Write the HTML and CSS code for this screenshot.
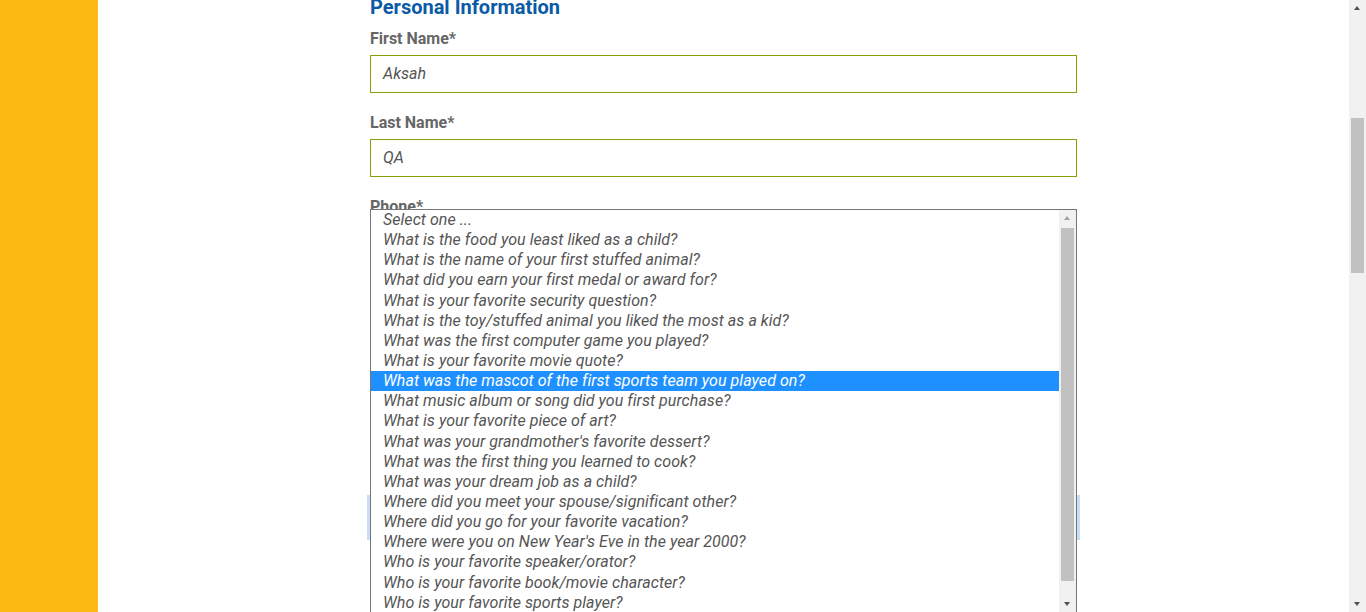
FILE: index.html
```html
<!DOCTYPE html>
<html lang="en">
<head>
<meta charset="utf-8">
<title>Personal Information</title>
<link rel="stylesheet" href="styles.css">
</head>
<body>
<div class="page">
  <aside class="sidebar"></aside>
  <main class="main">
    <div class="content">
      <h2 class="heading">Personal Information</h2>
      <div class="group">
        <label class="label">First Name*</label>
        <div class="input">Aksah</div>
      </div>
      <div class="group">
        <label class="label">Last Name*</label>
        <div class="input">QA</div>
      </div>
      <div class="group last">
        <label class="label">Phone*</label>
        <div class="input"></div>
      </div>
      <div class="focus-box"></div>

      <div class="listbox">
        <div class="options">
          <div class="opt">Select one ...</div>
          <div class="opt">What is the food you least liked as a child?</div>
          <div class="opt">What is the name of your first stuffed animal?</div>
          <div class="opt">What did you earn your first medal or award for?</div>
          <div class="opt">What is your favorite security question?</div>
          <div class="opt">What is the toy/stuffed animal you liked the most as a kid?</div>
          <div class="opt">What was the first computer game you played?</div>
          <div class="opt">What is your favorite movie quote?</div>
          <div class="opt selected">What was the mascot of the first sports team you played on?</div>
          <div class="opt">What music album or song did you first purchase?</div>
          <div class="opt">What is your favorite piece of art?</div>
          <div class="opt">What was your grandmother's favorite dessert?</div>
          <div class="opt">What was the first thing you learned to cook?</div>
          <div class="opt">What was your dream job as a child?</div>
          <div class="opt">Where did you meet your spouse/significant other?</div>
          <div class="opt">Where did you go for your favorite vacation?</div>
          <div class="opt">Where were you on New Year's Eve in the year 2000?</div>
          <div class="opt">Who is your favorite speaker/orator?</div>
          <div class="opt">Who is your favorite book/movie character?</div>
          <div class="opt">Who is your favorite sports player?</div>
        </div>
        <div class="lb-scroll">
          <div class="lb-up"></div>
          <div class="lb-track"><div class="lb-thumb"></div></div>
          <div class="lb-down"></div>
        </div>
      </div>
    </div>
  </main>
  <div class="page-scroll">
    <div class="ps-up"></div>
    <div class="ps-track"><div class="ps-thumb"></div></div>
    <div class="ps-down"></div>
  </div>
</div>
</body>
</html>
```

FILE: styles.css
```css
* { box-sizing: border-box; }
html, body {
  margin: 0;
  padding: 0;
  height: 612px;
  overflow: hidden;
  background: #fff;
  font-family: Roboto, "Liberation Sans", sans-serif;
}
.page {
  display: flex;
  height: 612px;
}
.sidebar {
  width: 98px;
  flex: none;
  background: #fdb913;
}
.main {
  flex: 1;
  display: flex;
  justify-content: center;
  overflow: hidden;
}
.content {
  width: 707px;
  padding-top: 1px;
  position: relative;
}
.heading {
  margin: -6px 0 10px;
  font-size: 20px;
  line-height: 24px;
  font-weight: 700;
  color: #0b5aa6;
}
.group {
  margin-bottom: 20px;
}
.group.last {
  margin-bottom: 0;
}
.label {
  display: block;
  font-size: 16px;
  line-height: 20px;
  font-weight: 700;
  color: #666;
  margin-bottom: 6px;
}
.input {
  height: 38px;
  border: 1px solid #8c9e0a;
  padding: 0 12px;
  font-size: 16px;
  line-height: 36px;
  font-style: italic;
  color: #555;
}
.focus-box {
  margin: 234px -3px 0;
  height: 45px;
  background: #c8ddf8;
}
.listbox {
  position: absolute;
  left: 0;
  top: 209px;
  width: 707px;
  height: 405px;
  border: 1px solid #767676;
  background: #fff;
  display: flex;
  overflow: hidden;
}
.options {
  flex: 1;
}
.opt {
  height: 20.15px;
  line-height: 19px;
  padding-left: 12px;
  font-size: 16px;
  font-style: italic;
  color: #555;
  letter-spacing: 0.05px;
  white-space: nowrap;
}
.opt.selected {
  background: #1e90ff;
  color: #fff;
}
.lb-scroll {
  width: 17px;
  flex: none;
  background: #f1f1f1;
  display: flex;
  flex-direction: column;
  height: 402px;
}
.lb-up, .lb-down {
  height: 17px;
  flex: none;
  position: relative;
}
.lb-up::after, .lb-down::after, .ps-up::after, .ps-down::after {
  content: "";
  position: absolute;
  left: 5px;
  width: 0;
  height: 0;
  border-left: 3.5px solid transparent;
  border-right: 3.5px solid transparent;
}
.lb-up::after { top: 6px; border-bottom: 4px solid #a3a3a3; }
.lb-down::after { top: 7px; border-top: 4px solid #505050; }
.lb-track {
  flex: 1;
  padding: 1px 2px 0;
}
.lb-thumb {
  height: 353px;
  background: #c1c1c1;
}
.page-scroll {
  width: 17px;
  flex: none;
  background: #f1f1f1;
  display: flex;
  flex-direction: column;
}
.ps-up, .ps-down {
  height: 17px;
  flex: none;
  position: relative;
}
.ps-up::after { top: 6px; border-bottom: 4px solid #505050; }
.ps-down::after { top: 7px; border-top: 4px solid #505050; }
.ps-track {
  flex: 1;
  padding: 101px 2px 0;
}
.ps-thumb {
  height: 155px;
  background: #c1c1c1;
}
```
